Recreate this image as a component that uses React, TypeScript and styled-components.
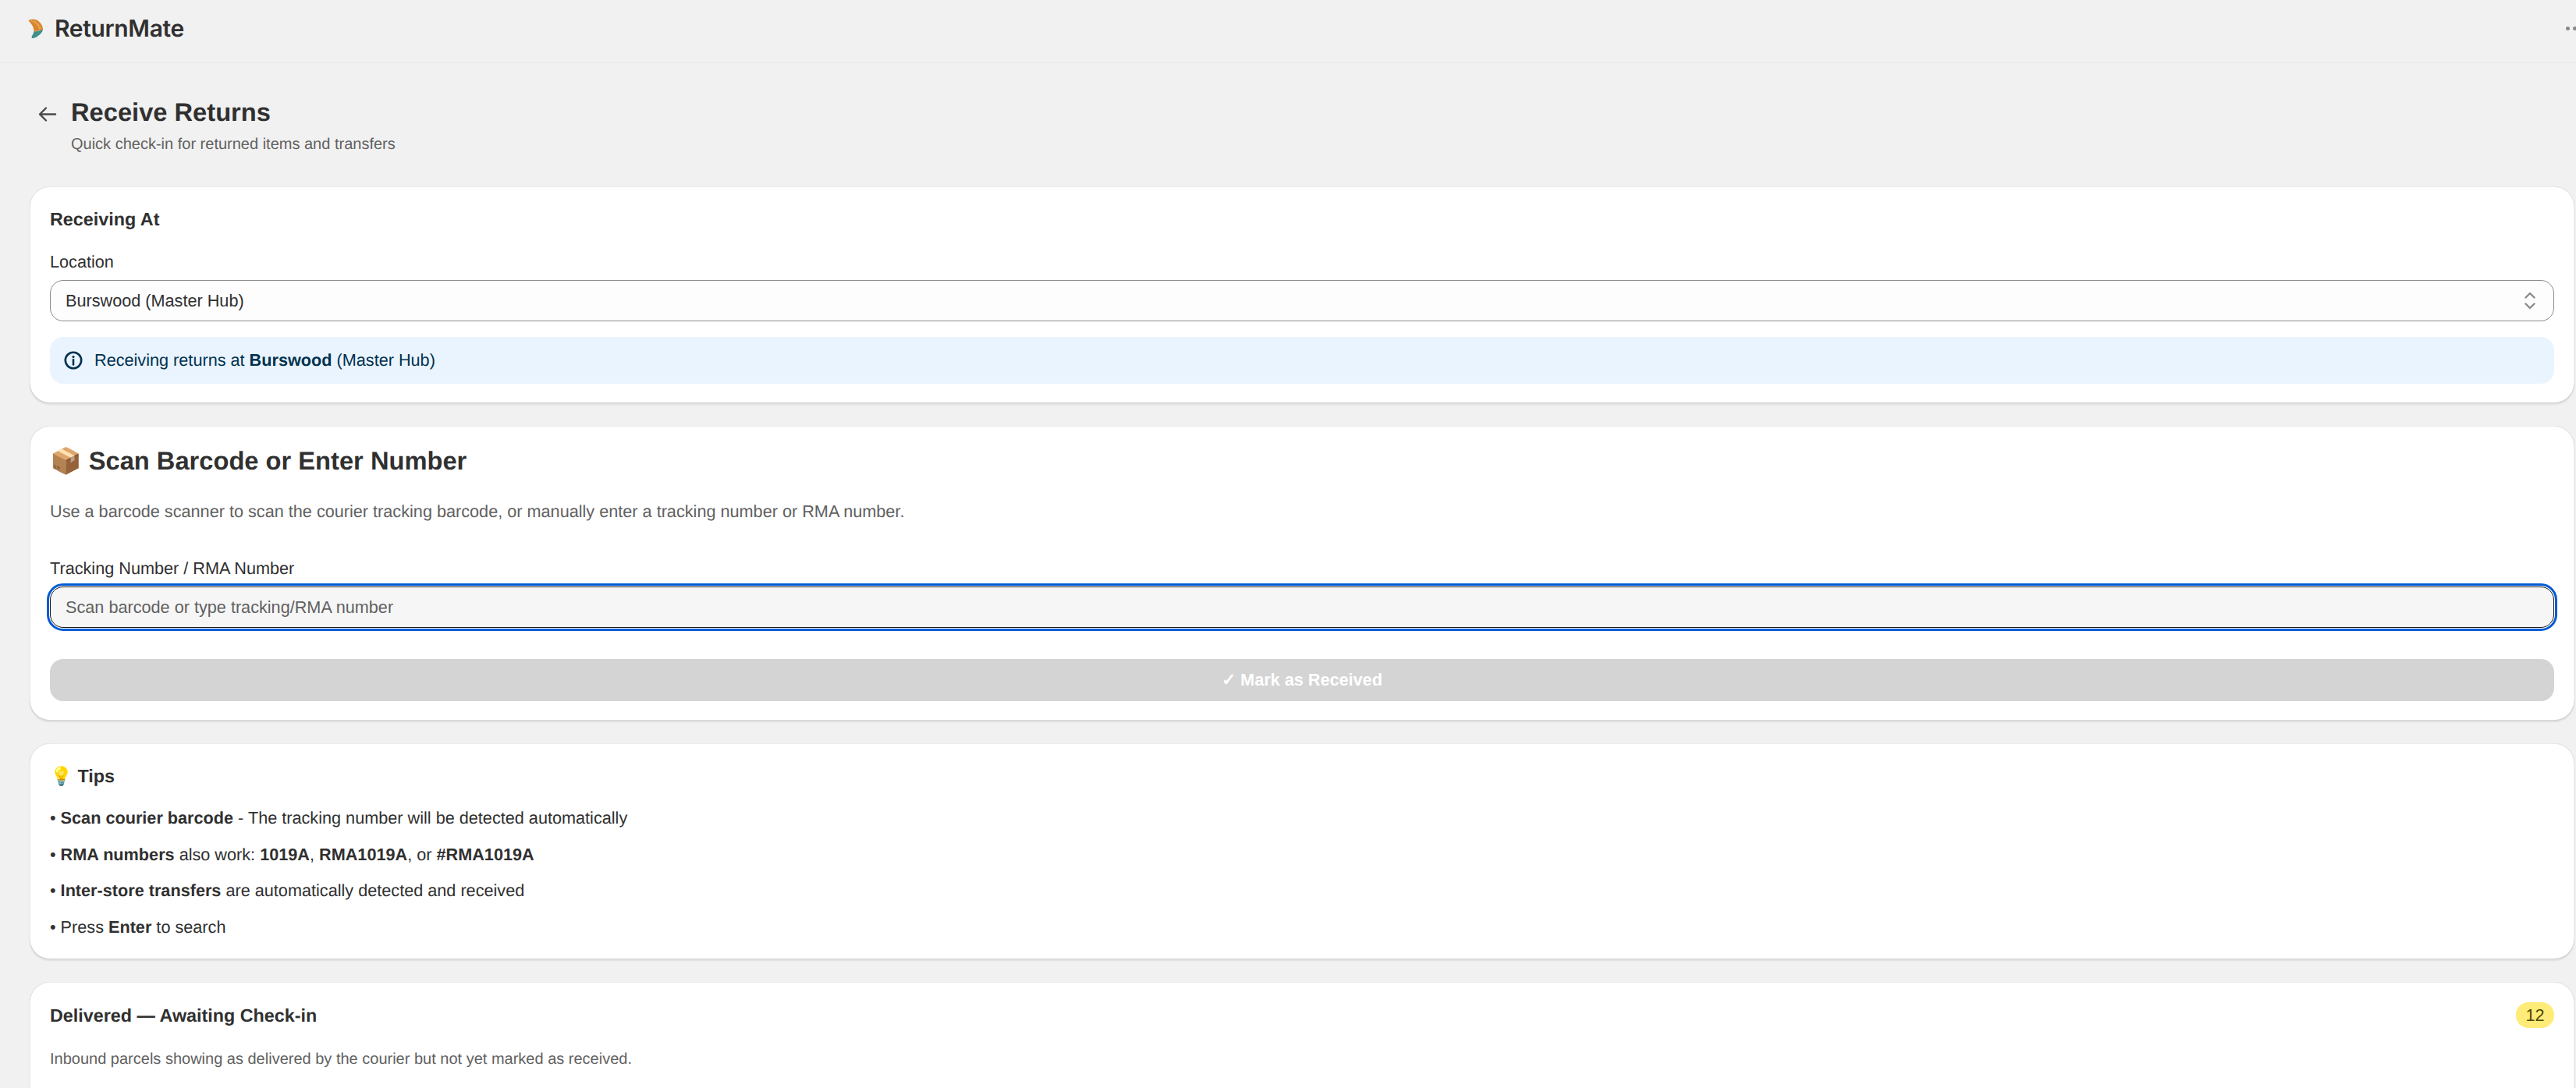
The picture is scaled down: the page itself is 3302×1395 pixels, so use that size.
import React from 'react';
import styled, { createGlobalStyle } from 'styled-components';

const GlobalStyle = createGlobalStyle`
  html, body {
    margin: 0;
    height: 1395px;
    overflow: hidden;
    background: #f1f1f1;
    font-family: "Liberation Sans", Arial, sans-serif;
    color: #303030;
    text-rendering: geometricPrecision;
  }
`;

const TopBar = styled.header`
  height: 81px;
  box-sizing: border-box;
  display: flex;
  align-items: center;
  justify-content: space-between;
  padding: 0 0 7px 36px;
  border-bottom: 1px solid #e8e8e8;
  overflow: hidden;
`;

const Brand = styled.div`
  display: flex;
  align-items: center;
  gap: 14px;
`;

const BrandName = styled.span`
  font-family: Inter, "Liberation Sans", sans-serif;
  font-size: 30px;
  font-weight: 600;
  letter-spacing: -0.35px;
  color: #303030;
  line-height: 36px;
`;

const Dots = styled.div`
  display: flex;
  gap: 4px;
  margin-right: -10px;
  flex: none;
`;

const Dot = styled.span`
  width: 5px;
  height: 5px;
  border-radius: 50%;
  background: #8a8a8a;
`;

const Main = styled.main`
  padding: 0 2px 0 38px;
`;

const PageHead = styled.div`
  display: flex;
  gap: 18px;
  padding: 44px 0 0 11px;
  height: 158px;
  box-sizing: border-box;
`;

const BackButton = styled.button`
  all: unset;
  display: flex;
  width: 24px;
  height: 24px;
  margin-top: 9px;
  flex: none;
`;

const TitleBlock = styled.div`
  display: flex;
  flex-direction: column;
`;

const PageTitle = styled.h1`
  margin: 0;
  font-size: 32.67px;
  line-height: 38px;
  font-weight: 700;
  color: #303030;
`;

const PageSub = styled.p`
  margin: 8px 0 0;
  font-size: 20px;
  line-height: 28px;
  color: #616161;
`;

const Card = styled.section<{ $tall?: boolean }>`
  background: #fff;
  border-radius: 26px;
  padding: 27px 26px 25px;
  margin-bottom: 29px;
  box-shadow: 0 2px 2px rgba(0, 0, 0, 0.08), inset 0 -1px 0 rgba(0, 0, 0, 0.17),
    inset 1px 0 0 rgba(0, 0, 0, 0.08), inset -1px 0 0 rgba(0, 0, 0, 0.08),
    inset 0 1px 0 rgba(0, 0, 0, 0.08);
  min-height: ${({ $tall }) => ($tall ? '420px' : '0')};
`;

const CardTitle = styled.h2`
  margin: 0;
  font-size: 23.33px;
  line-height: 30px;
  font-weight: 700;
  color: #303030;
`;

const BigTitle = styled.h2`
  margin: 0;
  font-size: 32.67px;
  line-height: 36px;
  font-weight: 700;
  color: #303030;
`;

const Label = styled.label<{ $top: number }>`
  display: block;
  margin-top: ${({ $top }) => $top}px;
  font-size: 21.67px;
  line-height: 28px;
  color: #303030;
`;

const SelectWrap = styled.div`
  position: relative;
  margin-top: 9px;
`;

const Select = styled.select`
  appearance: none;
  display: block;
  width: 100%;
  height: 53px;
  box-sizing: border-box;
  padding: 0 60px 0 19px;
  font: 21.67px/28px "Liberation Sans", Arial, sans-serif;
  color: #303030;
  background: #fdfdfd;
  border: 1.5px solid #8a8a8a;
  border-radius: 17px;
`;

const Chevrons = styled.svg`
  position: absolute;
  right: 24px;
  top: 15px;
  width: 14px;
  height: 23px;
  pointer-events: none;
`;

const Banner = styled.div`
  display: flex;
  align-items: center;
  gap: 15px;
  height: 60px;
  box-sizing: border-box;
  margin-top: 20px;
  padding: 0 18px;
  background: #eaf4ff;
  border-radius: 17px;
  font-size: 21.67px;
  color: #00324f;
`;

const Hint = styled.p<{ $top: number; $size: number }>`
  margin: ${({ $top }) => $top}px 0 0;
  font-size: ${({ $size }) => $size}px;
  line-height: 28px;
  color: #616161;
`;

const TrackingInput = styled.input`
  display: block;
  width: 100%;
  height: 53px;
  box-sizing: border-box;
  margin-top: 9px;
  padding: 0 19px;
  font: 21.67px/28px "Liberation Sans", Arial, sans-serif;
  color: #303030;
  background: #f6f6f6;
  border: 1.5px solid #1a1a1a;
  border-radius: 17px;
  outline: 3.5px solid #005bd3;
  outline-offset: 1px;

  &::placeholder {
    color: #616161;
    opacity: 1;
  }
`;

const SubmitButton = styled.button`
  display: block;
  width: 100%;
  height: 54px;
  margin-top: 40px;
  border: none;
  border-radius: 17px;
  background: #d4d4d4;
  color: #fff;
  font: 700 21.67px/28px "Liberation Sans", Arial, sans-serif;
`;

const TipList = styled.ul`
  list-style: none;
  margin: 25px 0 2px;
  padding: 0;
  display: flex;
  flex-direction: column;
  gap: 18.7px;
`;

const Tip = styled.li`
  font-size: 21.67px;
  line-height: 28px;
  color: #303030;
`;

const CardHeadRow = styled.div`
  display: flex;
  align-items: center;
  justify-content: space-between;
  margin-top: -1px;
`;

const CountBadge = styled.span`
  display: flex;
  align-items: center;
  justify-content: center;
  width: 49px;
  height: 33px;
  border-radius: 16px;
  background: #ffeb78;
  color: #4f4700;
  font-size: 21.67px;
`;

const Logo = () => (
  <svg width="20" height="26" viewBox="0 0 20 26">
    <path d="M0.500 2.500C2 0.500 8 0 11 1.500 15 4 19 8 19 14L7.500 17C8 12 5 7 0.500 2.500z" fill="#d9852e" />
    <path d="M4 2.500c4 1.500 9 5.500 11 11M7.500 2.500c3.500 2 7 5.500 9 10.500" stroke="#f0b26a" strokeWidth="1" fill="none" />
    <path d="M19 13.500C19 18 12 24 6.500 25 4.500 25.500 4 24 5 22 6 20.500 7 18.500 7.500 16.500 11 16.500 16 15.500 19 13.500z" fill="#3f8f8a" />
  </svg>
);

const ArrowLeft = () => (
  <svg width="24" height="24" viewBox="0 0 24 24" fill="none" stroke="#4a4a4a" strokeWidth="2.400" strokeLinecap="round" strokeLinejoin="round">
    <path d="M22 12.500H2.500M10 4.500l-8 8 8 8" />
  </svg>
);

const InfoIcon = () => (
  <svg width="24" height="24" viewBox="0 0 24 24" fill="none" style={{ flex: 'none' }}>
    <circle cx="12" cy="12" r="10.200" stroke="#00324f" strokeWidth="2.600" />
    <circle cx="12" cy="7.500" r="1.600" fill="#00324f" />
    <path d="M12 11v6.500" stroke="#00324f" strokeWidth="2.600" strokeLinecap="round" />
  </svg>
);

export default function App() {
  return (
    <>
      <GlobalStyle />
      <TopBar>
        <Brand>
          <Logo />
          <BrandName>ReturnMate</BrandName>
        </Brand>
        <Dots>
          <Dot />
          <Dot />
          <Dot />
        </Dots>
      </TopBar>
      <Main>
        <PageHead>
          <BackButton aria-label="Back">
            <ArrowLeft />
          </BackButton>
          <TitleBlock>
            <PageTitle>Receive Returns</PageTitle>
            <PageSub>Quick check-in for returned items and transfers</PageSub>
          </TitleBlock>
        </PageHead>

        <Card>
          <CardTitle>Receiving At</CardTitle>
          <Label $top={26}>Location</Label>
          <SelectWrap>
            <Select defaultValue="burswood">
              <option value="burswood">Burswood (Master Hub)</option>
            </Select>
            <Chevrons viewBox="0 0 14 23" fill="none" stroke="#8a8a8a" strokeWidth="2.400" strokeLinecap="round" strokeLinejoin="round">
              <path d="M1.500 7.500 7 2l5.500 5.500M1.500 15.500 7 21l5.500-5.500" />
            </Chevrons>
          </SelectWrap>
          <Banner>
            <InfoIcon />
            <span>
              Receiving returns at <strong>Burswood</strong> (Master Hub)
            </span>
          </Banner>
        </Card>

        <Card>
          <BigTitle>📦 Scan Barcode or Enter Number</BigTitle>
          <Hint $top={33} $size={21.67}>
            Use a barcode scanner to scan the courier tracking barcode, or manually enter a tracking number or RMA number.
          </Hint>
          <Label $top={45}>Tracking Number / RMA Number</Label>
          <TrackingInput placeholder="Scan barcode or type tracking/RMA number" />
          <SubmitButton disabled>✓ Mark as Received</SubmitButton>
        </Card>

        <Card>
          <CardTitle>💡 Tips</CardTitle>
          <TipList>
            <Tip>
              • <strong>Scan courier barcode</strong> - The tracking number will be detected automatically
            </Tip>
            <Tip>
              • <strong>RMA numbers</strong> also work: <strong>1019A</strong>, <strong>RMA1019A</strong>, or <strong>#RMA1019A</strong>
            </Tip>
            <Tip>
              • <strong>Inter-store transfers</strong> are automatically detected and received
            </Tip>
            <Tip>
              • Press <strong>Enter</strong> to search
            </Tip>
          </TipList>
        </Card>

        <Card $tall>
          <CardHeadRow>
            <CardTitle>Delivered — Awaiting Check-in</CardTitle>
            <CountBadge>12</CountBadge>
          </CardHeadRow>
          <Hint $top={26} $size={20}>
            Inbound parcels showing as delivered by the courier but not yet marked as received.
          </Hint>
        </Card>
      </Main>
    </>
  );
}
